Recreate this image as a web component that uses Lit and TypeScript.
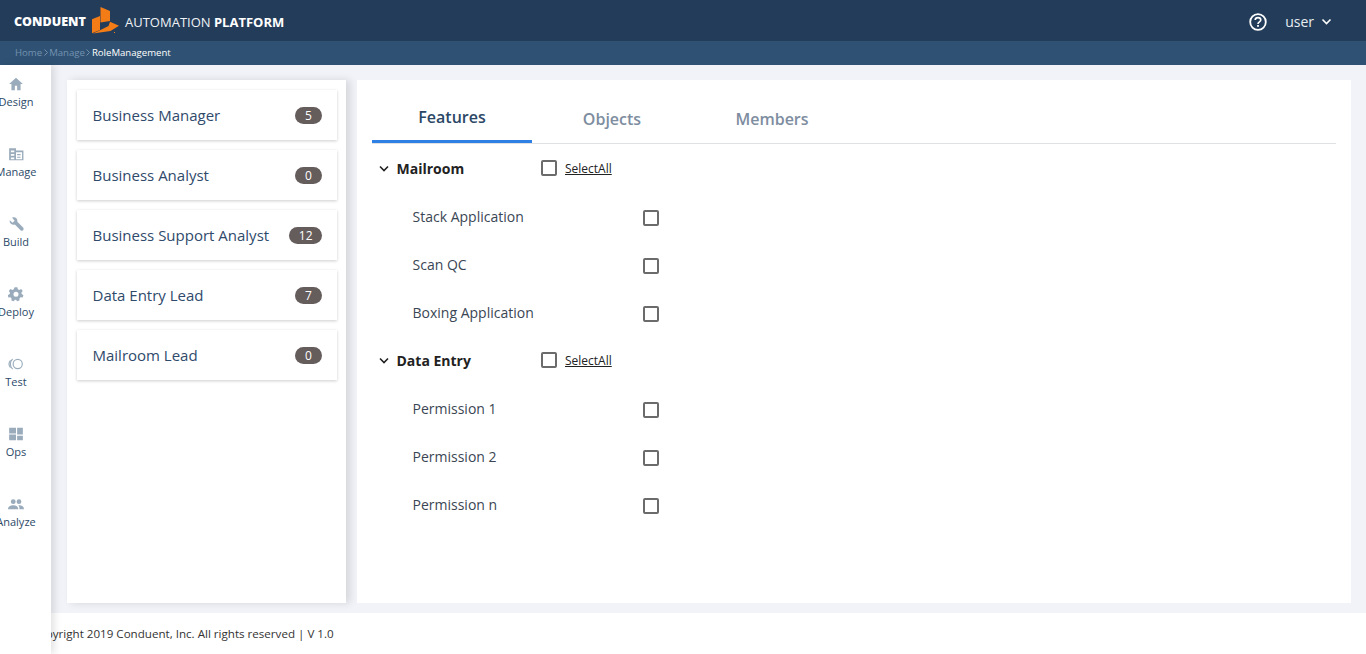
import { LitElement, css, html, svg } from "lit";
import { customElement } from "lit/decorators.js";

const NAV = [
    { label: "Design", icon: svg`<path d="M7 1.5 L1 7 H3 V12.5 H6 V8.5 H8 V12.5 H11 V7 H13 Z"/>` },
    { label: "Manage", icon: svg`<path fill-rule="evenodd" d="M1 2 H7 V4 H13.5 V12.5 H1 Z M2.5 4 V5.5 H5.5 V4 Z M2.5 7 V8.5 H5.5 V7 Z M2.5 10 V11.5 H5.5 V10 Z M7 5.5 V11.5 H12.3 V5.5 Z M8 7 H11 V8 H8 Z M8 9.3 H11 V10.3 H8 Z"/>` },
    { label: "Build", icon: svg`<path d="M1.5 3.8 L4 6 L5.8 4.2 L3.6 1.6 C6 .4 8.6 2 8.2 5 L13.4 10.2 C13.9 11 13.8 11.6 13.2 12.4 C12.4 13 11.6 13 11 12.4 L6 7.4 C3 8.2 1 6.4 1.5 3.8 Z"/>` },
    { label: "Deploy", icon: svg`<path fill-rule="evenodd" d="M5.8 1 H8.2 L8.6 2.8 L9.8 3.4 L11.5 2.6 L12.9 4.4 L11.7 5.8 L12 7 L13.5 8 L12.8 10 L11 9.9 L10 11 L10 12.7 L8 13.4 L7 12 H6 L5 13.4 L3 12.7 L3.1 11 L2 9.9 L.3 10 L-.2 8 L1.5 7 L1.7 5.8 L.7 4.4 L2.1 2.6 L3.8 3.4 L5 2.8 Z M7 5 A2.2 2.2 0 1 0 7 9.4 A2.2 2.2 0 1 0 7 5 Z"/>` },
    { label: "Test", icon: svg`<g fill="none" stroke="currentColor" stroke-width="1"><circle cx="8.5" cy="7" r="4"/><path d="M4 2.6 A6 6 0 0 0 4 11.4"/><path d="M2.2 3.8 A5 5 0 0 0 2.2 10.2"/></g>` },
    { label: "Ops", icon: svg`<path d="M1 1.5 H7 V6.5 H1 Z M8 1.5 H13 V7.5 H8 Z M1 7.5 H7 V12.5 H1 Z M8 8.5 H13 V12.5 H8 Z"/>` },
    { label: "Analyze", icon: svg`<circle cx="4.6" cy="5" r="2.1"/><circle cx="9.6" cy="5" r="2.1"/><path d="M0 11.5 C0 8.8 2.6 8 4.6 8 C6.6 8 9 8.8 9 11.5 Z M9.6 8 C11.6 8 14 8.8 14 11.5 H10 C10 10 9.8 9 9 8.2 Z"/>` },
];

const ROLES = [
    { name: "Business Manager", count: 5 },
    { name: "Business Analyst", count: 0 },
    { name: "Business Support Analyst", count: 12 },
    { name: "Data Entry Lead", count: 7 },
    { name: "Mailroom Lead", count: 0 },
];

const GROUPS = [
    { name: "Mailroom", items: ["Stack Application", "Scan QC", "Boxing Application"] },
    { name: "Data Entry", items: ["Permission 1", "Permission 2", "Permission n"] },
];

const chevron = svg`<path d="M1 1.5 L5 5.5 L9 1.5" fill="none" stroke="currentColor" stroke-width="1.6"/>`;

@customElement("app-root")
export class AppRoot extends LitElement {
    static styles = css`
      :host {
        display: flex;
        flex-direction: column;
        height: 654px;
        overflow: hidden;
        font-family: "Open Sans", sans-serif;
        background: #f1f3f8;
      }
      .topbar {
        height: 41px;
        flex: none;
        display: flex;
        align-items: center;
        padding: 0 34px 0 14px;
        background: #233c5a;
        color: #fff;
      }
      .wordmark {
        font-size: 12.5px;
        font-weight: 800;
        width: 78px;
        margin-top: 2px;
      }
      .logo {
        width: 28px;
        height: 28px;
        margin-top: -2px;
      }
      .product {
        margin-left: 5px;
        margin-top: 2px;
        font-size: 13px;
        color: #eef2f6;
      }
      .product b {
        font-weight: 700;
        color: #fff;
      }
      .spacer {
        flex: 1;
      }
      .help {
        width: 18px;
        height: 18px;
        margin-right: 18px;
        margin-top: 2px;
      }
      .user {
        font-size: 14px;
        margin-top: 2px;
        color: #e8edf2;
      }
      .user-chevron {
        width: 11px;
        height: 7px;
        margin-left: 7px;
        margin-top: 2px;
        color: #fff;
      }
      .crumbs {
        height: 24px;
        flex: none;
        box-sizing: border-box;
        padding: 0 0 2px 15px;
        display: flex;
        align-items: center;
        background: #2f5274;
        font-size: 9.6px;
        color: #7391af;
      }
      .crumbs svg {
        width: 4px;
        height: 7px;
        margin: 0 1.5px;
      }
      .crumbs .current {
        color: #fff;
      }
      .shell {
        flex: 1;
        min-height: 0;
        display: flex;
      }
      .sidebar {
        width: 51px;
        flex: none;
        position: relative;
        z-index: 2;
        background: #fff;
        box-shadow: 3px 0 8px rgba(0, 0, 0, 0.12);
        padding-top: 11px;
        box-sizing: border-box;
      }
      .nav-item {
        width: 32px;
        height: 70px;
        display: flex;
        flex-direction: column;
        align-items: center;
        font-size: 11px;
        line-height: 15px;
        color: #2c4a68;
        white-space: nowrap;
      }
      .nav-item svg {
        width: 16px;
        height: 16px;
        margin-bottom: 2px;
        fill: #9aacbc;
        color: #9aacbc;
      }
      .column {
        flex: 1;
        min-width: 0;
        display: flex;
        flex-direction: column;
      }
      .content {
        flex: 1;
        min-height: 0;
        display: flex;
        gap: 11px;
        padding: 15px 15px 10px 16px;
      }
      .roles {
        width: 279px;
        flex: none;
        box-sizing: border-box;
        padding: 10px 9px 0 10px;
        display: flex;
        flex-direction: column;
        gap: 10px;
        background: #fff;
        box-shadow: 4px 0 8px rgba(0, 0, 0, 0.12);
      }
      .role {
        height: 50px;
        box-sizing: border-box;
        display: flex;
        align-items: center;
        justify-content: space-between;
        padding: 0 15px 0 15.5px;
        background: #fff;
        box-shadow: 0 1px 3px rgba(0, 0, 0, 0.2);
        font-size: 15px;
        color: #2f4a6b;
      }
      .badge {
        min-width: 27px;
        height: 17px;
        box-sizing: border-box;
        padding: 0 9.5px;
        border-radius: 9px;
        background: #655c5c;
        color: #fff;
        font-size: 12px;
        line-height: 17px;
        text-align: center;
      }
      .panel {
        flex: 1;
        min-width: 0;
        background: #fff;
        padding: 0 15px;
      }
      .tabs {
        height: 64px;
        box-sizing: border-box;
        display: flex;
        border-bottom: 1px solid #dfe1e5;
      }
      .tab {
        width: 160px;
        height: 63px;
        box-sizing: border-box;
        padding-top: 27px;
        text-align: center;
        font-size: 16px;
        line-height: 24px;
        font-weight: 600;
        color: #7e8da0;
      }
      .tab.active {
        padding-top: 25px;
        color: #2b4766;
        border-bottom: 3px solid #2f80e4;
      }
      .group + .group {
        margin-top: -2px;
      }
      .group-head {
        height: 48px;
        margin-bottom: 2px;
        display: flex;
        align-items: center;
        font-size: 14px;
        color: #222;
      }
      .group-chevron {
        width: 10px;
        height: 7px;
        margin: 1px 7.5px 0 7px;
      }
      .group-name {
        width: 144.5px;
        font-weight: 700;
      }
      .box {
        width: 16px;
        height: 16px;
        box-sizing: border-box;
        border: 2px solid #6b6b6b;
        border-radius: 2px;
        background: #fff;
        flex: none;
      }
      .select-all {
        margin-left: 8px;
        font-size: 12px;
        color: #222;
        text-decoration: underline;
      }
      .row {
        height: 48px;
        display: flex;
        align-items: center;
        padding-left: 40.5px;
        font-size: 14px;
        color: #3a4654;
      }
      .row span {
        width: 230.5px;
        margin-top: -4px;
      }
      .footer {
        height: 41px;
        flex: none;
        box-sizing: border-box;
        margin-left: -19.6px;
        display: flex;
        align-items: center;
        background: #fff;
        font-size: 11.6px;
        color: #333;
      }
    `;

    render() {
        return html`
      <div class="topbar">
        <span class="wordmark">CONDUENT</span>
        <svg class="logo" viewBox="92 6 28 28">
          <path fill="#f47c16" d="M100.5 7 L110 11 V21 L100.5 22.5 Z"/>
          <path fill="#f47c16" d="M92 19.3 L100 16 V30 L92 33.3 Z"/>
          <path fill="#f47c16" d="M110 21.7 L119 25.7 L110.5 31 L93 33.5 L100 30.3 L108.5 26 Z"/>
          <rect x="114" y="32" width="1" height="1" fill="#f47c16"/>
        </svg>
        <span class="product">AUTOMATION <b>PLATFORM</b></span>
        <span class="spacer"></span>
        <svg class="help" viewBox="0 0 18 18">
          <circle cx="9" cy="9" r="7.8" fill="none" stroke="#fff" stroke-width="1.8"/>
          <path d="M6.2 7 C6.2 3.8 11.8 3.8 11.8 7 C11.8 9 9 8.8 9 11" fill="none" stroke="#fff" stroke-width="1.6"/>
          <rect x="8.1" y="12" width="1.8" height="1.8" fill="#fff"/>
        </svg>
        <span class="user">user</span>
        <svg class="user-chevron" viewBox="0 0 10 7">${chevron}</svg>
      </div>
      <div class="crumbs">
        <span>Home</span>
        <svg viewBox="0 0 4 7"><path d="M.5 .5 L3.5 3.5 L.5 6.5" fill="none" stroke="#7391af"/></svg>
        <span>Manage</span>
        <svg viewBox="0 0 4 7"><path d="M.5 .5 L3.5 3.5 L.5 6.5" fill="none" stroke="#7391af"/></svg>
        <span class="current">RoleManagement</span>
      </div>
      <div class="shell">
        <nav class="sidebar">
          ${NAV.map(
              (item) => html`
            <div class="nav-item">
              <svg viewBox="0 0 14 14">${item.icon}</svg>
              <span>${item.label}</span>
            </div>
          `,
          )}
        </nav>
        <div class="column">
          <div class="content">
            <section class="roles">
              ${ROLES.map(
                  (role) => html`
                <div class="role">
                  <span>${role.name}</span>
                  <span class="badge">${role.count}</span>
                </div>
              `,
              )}
            </section>
            <section class="panel">
              <div class="tabs">
                <div class="tab active">Features</div>
                <div class="tab">Objects</div>
                <div class="tab">Members</div>
              </div>
              ${GROUPS.map(
                  (group) => html`
                <div class="group">
                  <div class="group-head">
                    <svg class="group-chevron" viewBox="0 0 10 7">${chevron}</svg>
                    <span class="group-name">${group.name}</span>
                    <span class="box"></span>
                    <span class="select-all">SelectAll</span>
                  </div>
                  ${group.items.map(
                      (item) => html`
                    <div class="row">
                      <span>${item}</span>
                      <div class="box"></div>
                    </div>
                  `,
                  )}
                </div>
              `,
              )}
            </section>
          </div>
          <footer class="footer">Copyright 2019 Conduent, Inc. All rights reserved | V 1.0</footer>
        </div>
      </div>
    `;
    }
}
